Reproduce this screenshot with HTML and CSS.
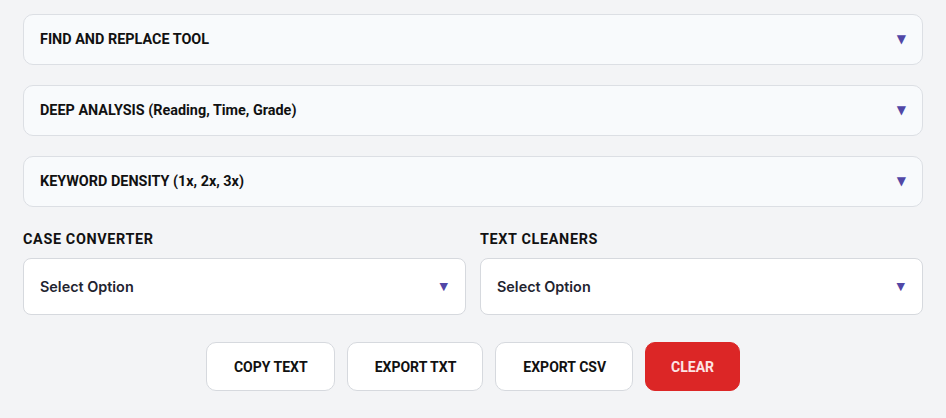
FILE: index.html
```html
<!DOCTYPE html>
<html lang="en">
<head>
<meta charset="utf-8">
<title>Text Tools</title>
<link rel="stylesheet" href="styles.css">
</head>
<body>
<main class="panel">
  <div class="accordion">
    <span class="acc-title">FIND AND REPLACE TOOL</span>
    <span class="arrow">▼</span>
  </div>
  <div class="accordion">
    <span class="acc-title">DEEP ANALYSIS (Reading, Time, Grade)</span>
    <span class="arrow">▼</span>
  </div>
  <div class="accordion">
    <span class="acc-title">KEYWORD DENSITY (1x, 2x, 3x)</span>
    <span class="arrow">▼</span>
  </div>
  <div class="selects">
    <div class="field">
      <div class="label">CASE CONVERTER</div>
      <div class="select"><span>Select Option</span><span class="arrow small">▼</span></div>
    </div>
    <div class="field">
      <div class="label">TEXT CLEANERS</div>
      <div class="select"><span>Select Option</span><span class="arrow small">▼</span></div>
    </div>
  </div>
  <div class="actions">
    <button class="btn">COPY TEXT</button>
    <button class="btn">EXPORT TXT</button>
    <button class="btn">EXPORT CSV</button>
    <button class="btn danger">CLEAR</button>
  </div>
</main>
</body>
</html>
```
FILE: styles.css
```css
* { box-sizing: border-box; }
html, body { margin: 0; padding: 0; }
body {
  background: #f3f4f6;
  font-family: Roboto, "Liberation Sans", sans-serif;
  color: #111111;
}
.panel {
  padding: 14px 23px 0 23px;
  display: flex;
  flex-direction: column;
}
.accordion {
  height: 51px;
  background: #f8fafc;
  border: 1px solid #dcdfe4;
  border-radius: 10px;
  display: flex;
  align-items: center;
  justify-content: space-between;
  padding: 0 16px 1px 16px;
  margin-bottom: 20px;
}
.acc-title {
  font-weight: 700;
  font-size: 14.4px;
  color: #111111;
}
.arrow {
  color: #5147a6;
  font-size: 12px;
  line-height: 1;
  font-family: "DejaVu Sans", sans-serif;
}
.arrow.small { font-size: 11px; }
.selects {
  display: grid;
  grid-template-columns: 1fr 1fr;
  gap: 14px;
  margin-top: 4px;
}
.label {
  font-weight: 700;
  font-size: 14.4px;
  letter-spacing: 0.65px;
  color: #111111;
  margin-bottom: 9px;
  line-height: 18px;
}
.select {
  height: 57px;
  background: #ffffff;
  border: 1px solid #d6d9de;
  border-radius: 8px;
  display: flex;
  align-items: center;
  justify-content: space-between;
  padding: 0 17px 0 16px;
  font-family: Inter, Roboto, sans-serif;
  font-weight: 600;
  font-size: 14.4px;
  color: #1f2430;
}
.actions {
  display: flex;
  justify-content: center;
  gap: 12px;
  margin-top: 27px;
}
.btn {
  height: 49px;
  padding: 0 26px 0 27px;
  background: #ffffff;
  border: 1px solid #d6d9de;
  border-radius: 10px;
  font-family: Roboto, "Liberation Sans", sans-serif;
  font-weight: 700;
  font-size: 14px;
  color: #111111;
}
.btn.danger {
  padding: 0 25px;
  background: #dc2626;
  border-color: #dc2626;
  color: #fde4e4;
}
```
